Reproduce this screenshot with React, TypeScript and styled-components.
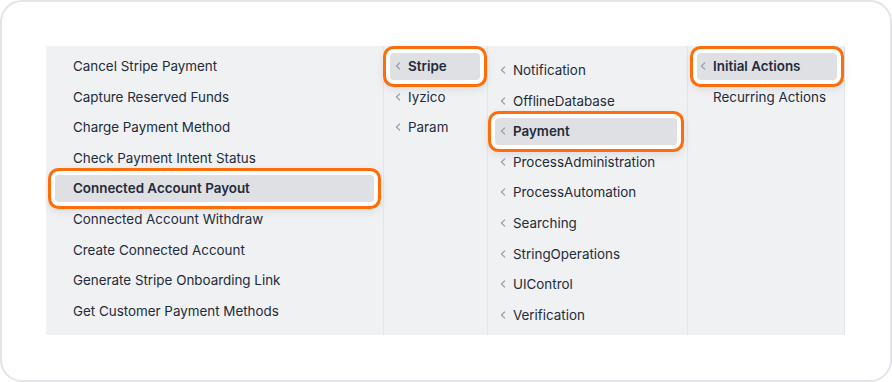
import React from "react";
import styled, { createGlobalStyle } from "styled-components";

const GlobalStyle = createGlobalStyle`
  * {
    box-sizing: border-box;
  }
  body {
    margin: 0;
    background: #ffffff;
    font-family: Inter, "Noto Sans", sans-serif;
  }
`;

const Card = styled.div`
  width: 892px;
  height: 382px;
  border: 2px solid #e3e5e8;
  border-radius: 22px;
  background: #ffffff;
  padding: 44px;
`;

const Panel = styled.div`
  display: flex;
  width: 799px;
  height: 289px;
  background: #f0f1f3;
`;

const Column = styled.div<{ $width: number; $top: number; $padLeft: number; $padRight: number }>`
  display: flex;
  flex-direction: column;
  gap: 3.6px;
  width: ${(props) => props.$width}px;
  flex-shrink: 0;
  padding: ${(props) => props.$top}px ${(props) => props.$padRight}px 0
    ${(props) => props.$padLeft}px;
  border-right: 1px solid #e3e5e9;
`;

const Item = styled.div<{ $active?: boolean; $indent: number }>`
  position: relative;
  display: flex;
  align-items: center;
  gap: 7px;
  height: 27px;
  padding-left: ${(props) => props.$indent}px;
  border-radius: 4px;
  font-size: 13.4px;
  white-space: nowrap;
  color: #222b3a;
  font-weight: ${(props) => (props.$active ? 600 : 400)};
  background: ${(props) => (props.$active ? "#dfe0e4" : "transparent")};
  z-index: ${(props) => (props.$active ? 1 : 0)};
  box-shadow: ${(props) =>
    props.$active
      ? "0 0 0 4px #ffffff, 0 0 0 7px #ff6c0a, 0 3px 10px 6px rgba(0, 0, 0, 0.1)"
      : "none"};
`;

const Chevron = styled.svg<{ $hidden?: boolean }>`
  width: 6px;
  height: 8px;
  flex-shrink: 0;
  visibility: ${(props) => (props.$hidden ? "hidden" : "visible")};
`;

const Arrow = ({ hidden }: { hidden?: boolean }) => (
  <Chevron $hidden={hidden} viewBox="0 0 6 8">
    <path
      d="M4.6 1 L1.4 4 L4.6 7"
      fill="none"
      stroke="#9aa1ad"
      strokeWidth="1.2"
      strokeLinecap="round"
      strokeLinejoin="round"
    />
  </Chevron>
);

const actions = [
  "Cancel Stripe Payment",
  "Capture Reserved Funds",
  "Charge Payment Method",
  "Check Payment Intent Status",
  "Connected Account Payout",
  "Connected Account Withdraw",
  "Create Connected Account",
  "Generate Stripe Onboarding Link",
  "Get Customer Payment Methods",
];

const providers = ["Stripe", "Iyzico", "Param"];

const categories = [
  "Notification",
  "OfflineDatabase",
  "Payment",
  "ProcessAdministration",
  "ProcessAutomation",
  "Searching",
  "StringOperations",
  "UIControl",
  "Verification",
];

const App: React.FC = () => {
  return (
    <>
      <GlobalStyle />
      <Card>
        <Panel>
          <Column $width={338} $top={6.5} $padLeft={9} $padRight={9}>
            {actions.map((name) => (
              <Item key={name} $indent={18} $active={name === "Connected Account Payout"}>
                {name}
              </Item>
            ))}
          </Column>
          <Column $width={104} $top={6.5} $padLeft={6} $padRight={7}>
            {providers.map((name) => (
              <Item key={name} $indent={5} $active={name === "Stripe"}>
                <Arrow />
                {name}
              </Item>
            ))}
          </Column>
          <Column $width={200} $top={10.5} $padLeft={7} $padRight={10}>
            {categories.map((name) => (
              <Item key={name} $indent={5} $active={name === "Payment"}>
                <Arrow />
                {name}
              </Item>
            ))}
          </Column>
          <Column $width={157} $top={6.5} $padLeft={9} $padRight={7}>
            <Item $indent={3} $active>
              <Arrow />
              Initial Actions
            </Item>
            <Item $indent={3}>
              <Arrow hidden />
              Recurring Actions
            </Item>
          </Column>
        </Panel>
      </Card>
    </>
  );
};

export default App;
